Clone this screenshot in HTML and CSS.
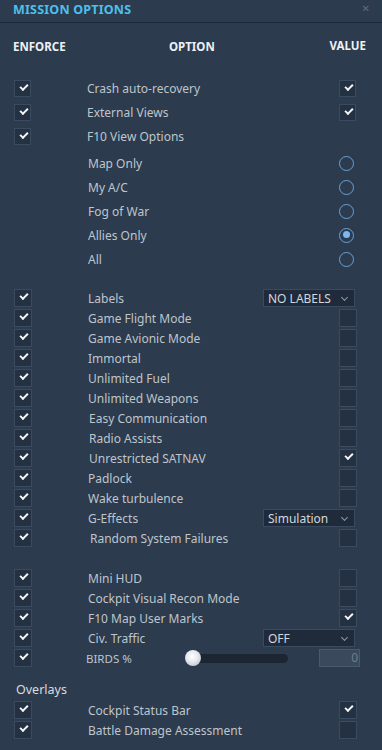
FILE: index.html
```html
<!DOCTYPE html>
<html lang="en">
<head>
    <meta charset="UTF-8">
    <meta name="viewport" content="width=device-width, initial-scale=1.0">
    <title>Mission Options</title>
    <link rel="stylesheet" href="styles.css">
</head>
<body>
    <div class="window">
        <div class="titlebar">
            <span class="title">MISSION OPTIONS</span>
            <span class="close">&#x2715;</span>
        </div>

        <div class="head">
            <span class="h-enforce">ENFORCE</span>
            <span class="h-option">OPTION</span>
            <span class="h-value">VALUE</span>
        </div>

        <div class="section tall">
            <div class="row"><span class="cb on"></span><span class="label">Crash auto-recovery</span><span class="value"><span class="cb on"></span></span></div>
            <div class="row"><span class="cb on"></span><span class="label">External Views</span><span class="value"><span class="cb on"></span></span></div>
            <div class="row"><span class="cb on"></span><span class="label">F10 View Options</span><span class="value"></span></div>
        </div>

        <div class="section tall radios">
            <div class="row"><span class="spacer"></span><span class="label">Map Only</span><span class="value"><span class="radio"></span></span></div>
            <div class="row"><span class="spacer"></span><span class="label">My A/C</span><span class="value"><span class="radio"></span></span></div>
            <div class="row"><span class="spacer"></span><span class="label">Fog of War</span><span class="value"><span class="radio"></span></span></div>
            <div class="row"><span class="spacer"></span><span class="label">Allies Only</span><span class="value"><span class="radio on"></span></span></div>
            <div class="row"><span class="spacer"></span><span class="label">All</span><span class="value"><span class="radio"></span></span></div>
        </div>

        <div class="section compact s2">
            <div class="row"><span class="cb on"></span><span class="label">Labels</span><span class="value"><span class="select">NO LABELS<i class="chev"></i></span></span></div>
            <div class="row"><span class="cb on"></span><span class="label">Game Flight Mode</span><span class="value"><span class="cb"></span></span></div>
            <div class="row"><span class="cb on"></span><span class="label">Game Avionic Mode</span><span class="value"><span class="cb"></span></span></div>
            <div class="row"><span class="cb on"></span><span class="label">Immortal</span><span class="value"><span class="cb"></span></span></div>
            <div class="row"><span class="cb on"></span><span class="label">Unlimited Fuel</span><span class="value"><span class="cb"></span></span></div>
            <div class="row"><span class="cb on"></span><span class="label">Unlimited Weapons</span><span class="value"><span class="cb"></span></span></div>
            <div class="row"><span class="cb on"></span><span class="label nudge">Easy Communication</span><span class="value"><span class="cb"></span></span></div>
            <div class="row"><span class="cb on"></span><span class="label nudge">Radio Assists</span><span class="value"><span class="cb"></span></span></div>
            <div class="row"><span class="cb on"></span><span class="label nudge">Unrestricted SATNAV</span><span class="value"><span class="cb on"></span></span></div>
            <div class="row"><span class="cb on"></span><span class="label">Padlock</span><span class="value"><span class="cb"></span></span></div>
            <div class="row"><span class="cb on"></span><span class="label">Wake turbulence</span><span class="value"><span class="cb"></span></span></div>
            <div class="row"><span class="cb on"></span><span class="label">G-Effects</span><span class="value"><span class="select">Simulation<i class="chev"></i></span></span></div>
            <div class="row"><span class="cb on"></span><span class="label nudge2">Random System Failures</span><span class="value"><span class="cb"></span></span></div>
        </div>

        <div class="section compact s3">
            <div class="row"><span class="cb on"></span><span class="label">Mini HUD</span><span class="value"><span class="cb"></span></span></div>
            <div class="row"><span class="cb on"></span><span class="label">Cockpit Visual Recon Mode</span><span class="value"><span class="cb"></span></span></div>
            <div class="row"><span class="cb on"></span><span class="label">F10 Map User Marks</span><span class="value"><span class="cb on"></span></span></div>
            <div class="row"><span class="cb on"></span><span class="label">Civ. Traffic</span><span class="value"><span class="select">OFF<i class="chev"></i></span></span></div>
            <div class="row"><span class="cb on"></span><span class="label birds">BIRDS %</span>
                <span class="slider"><span class="thumb"></span></span>
                <span class="numbox">0</span>
            </div>
        </div>

        <div class="overlays">Overlays</div>
        <div class="section compact">
            <div class="row"><span class="cb on"></span><span class="label">Cockpit Status Bar</span><span class="value"><span class="cb on"></span></span></div>
            <div class="row"><span class="cb on"></span><span class="label">Battle Damage Assessment</span><span class="value"><span class="cb"></span></span></div>
        </div>
    </div>
</body>
</html>
```

FILE: styles.css
```css
html, body {
    margin: 0;
    padding: 0;
    background: #2c3b4e;
}
body {
    font-family: "Noto Sans", "DejaVu Sans", sans-serif;
    color: #bfc5cc;
    font-size: 12px;
}
.window {
    width: 382px;
    height: 750px;
    overflow: hidden;
}
.titlebar {
    height: 22px;
    border-bottom: 1px solid #1f2a38;
    display: flex;
    align-items: center;
    justify-content: space-between;
    padding: 0 12px 0 13px;
}
.title {
    color: #4cc0ea;
    font-weight: bold;
    font-size: 12.5px;
    letter-spacing: 0.2px;
    margin-top: -4px;
}
.close {
    color: #5d6c7d;
    font-size: 10px;
    margin-top: -6px;
}
.head {
    height: 24px;
    margin-top: 11px;
    display: flex;
    align-items: center;
    padding: 0 16px 0 13px;
    font-weight: bold;
    font-size: 11.5px;
    color: #eef1f4;
}
.h-enforce {
    width: 156px;
}
.h-option {
    flex: 1;
}
.h-value {
    margin-top: -2px;
}
.section {
    display: flex;
    flex-direction: column;
}
.tall {
    margin-top: 18px;
}
.tall .row {
    height: 24px;
}
.radios {
    margin-top: 3px;
}
.compact .row {
    height: 20px;
}
.s2 {
    margin-top: 17px;
}
.s3 {
    margin-top: 20px;
}
.row {
    display: flex;
    align-items: center;
    padding-left: 14px;
}
.spacer {
    width: 18px;
}
.label {
    width: 177px;
    margin-left: 56px;
    white-space: nowrap;
}
.label.nudge {
    margin-left: 57px;
    width: 176px;
}
.label.nudge2 {
    margin-left: 58px;
    width: 175px;
}
.label.birds {
    margin-left: 54px;
    width: 80px;
    font-size: 11.5px;
}
.value {
    width: 92px;
    display: flex;
    justify-content: flex-end;
}
.cb {
    box-sizing: border-box;
    width: 18px;
    height: 18px;
    background: #243142;
    border: 1px solid #3b4b5f;
    position: relative;
    flex: none;
}
.tall .cb {
    width: 17px;
    height: 17px;
}
.cb.on::after {
    content: "";
    position: absolute;
    left: 5px;
    top: 3px;
    width: 6px;
    height: 3px;
    border-left: 2px solid #f2f4f6;
    border-bottom: 2px solid #f2f4f6;
    transform: rotate(-45deg);
}
.radio {
    box-sizing: border-box;
    width: 15px;
    height: 15px;
    border: 1.5px solid #6aa2d8;
    border-radius: 50%;
    margin-right: 3px;
    position: relative;
}
.radio.on::after {
    content: "";
    position: absolute;
    left: 2.5px;
    top: 2.5px;
    width: 7px;
    height: 7px;
    border-radius: 50%;
    background: #78b8f4;
}
.select {
    box-sizing: border-box;
    width: 92px;
    height: 18px;
    margin-right: 2px;
    background: #1f2b3a;
    border: 1px solid #3b4b5f;
    color: #d3d7dc;
    font-size: 12px;
    display: flex;
    align-items: center;
    padding-left: 4px;
    position: relative;
    flex: none;
}
.chev {
    position: absolute;
    right: 7px;
    top: 5px;
    width: 4px;
    height: 4px;
    border-right: 1px solid #8d99a7;
    border-bottom: 1px solid #8d99a7;
    transform: rotate(45deg);
}
.slider {
    width: 102px;
    height: 9px;
    margin-left: 20px;
    background: #1c2633;
    border-radius: 5px;
    position: relative;
}
.thumb {
    position: absolute;
    left: -1px;
    top: -4px;
    width: 16px;
    height: 16px;
    border-radius: 50%;
    background: radial-gradient(circle at 45% 40%, #ffffff 0%, #e4e8ee 45%, #aab3bf 100%);
}
.numbox {
    box-sizing: border-box;
    width: 41px;
    height: 18px;
    margin-left: 31px;
    background: #3a4a5c;
    border: 1px solid #4a5a6c;
    color: #6f7d8c;
    text-align: right;
    padding-right: 1px;
    line-height: 16px;
    font-size: 12px;
}
.overlays {
    height: 20px;
    margin-top: 12px;
    padding-left: 16px;
    line-height: 20px;
    font-size: 12.5px;
    color: #d8dce1;
}
```
